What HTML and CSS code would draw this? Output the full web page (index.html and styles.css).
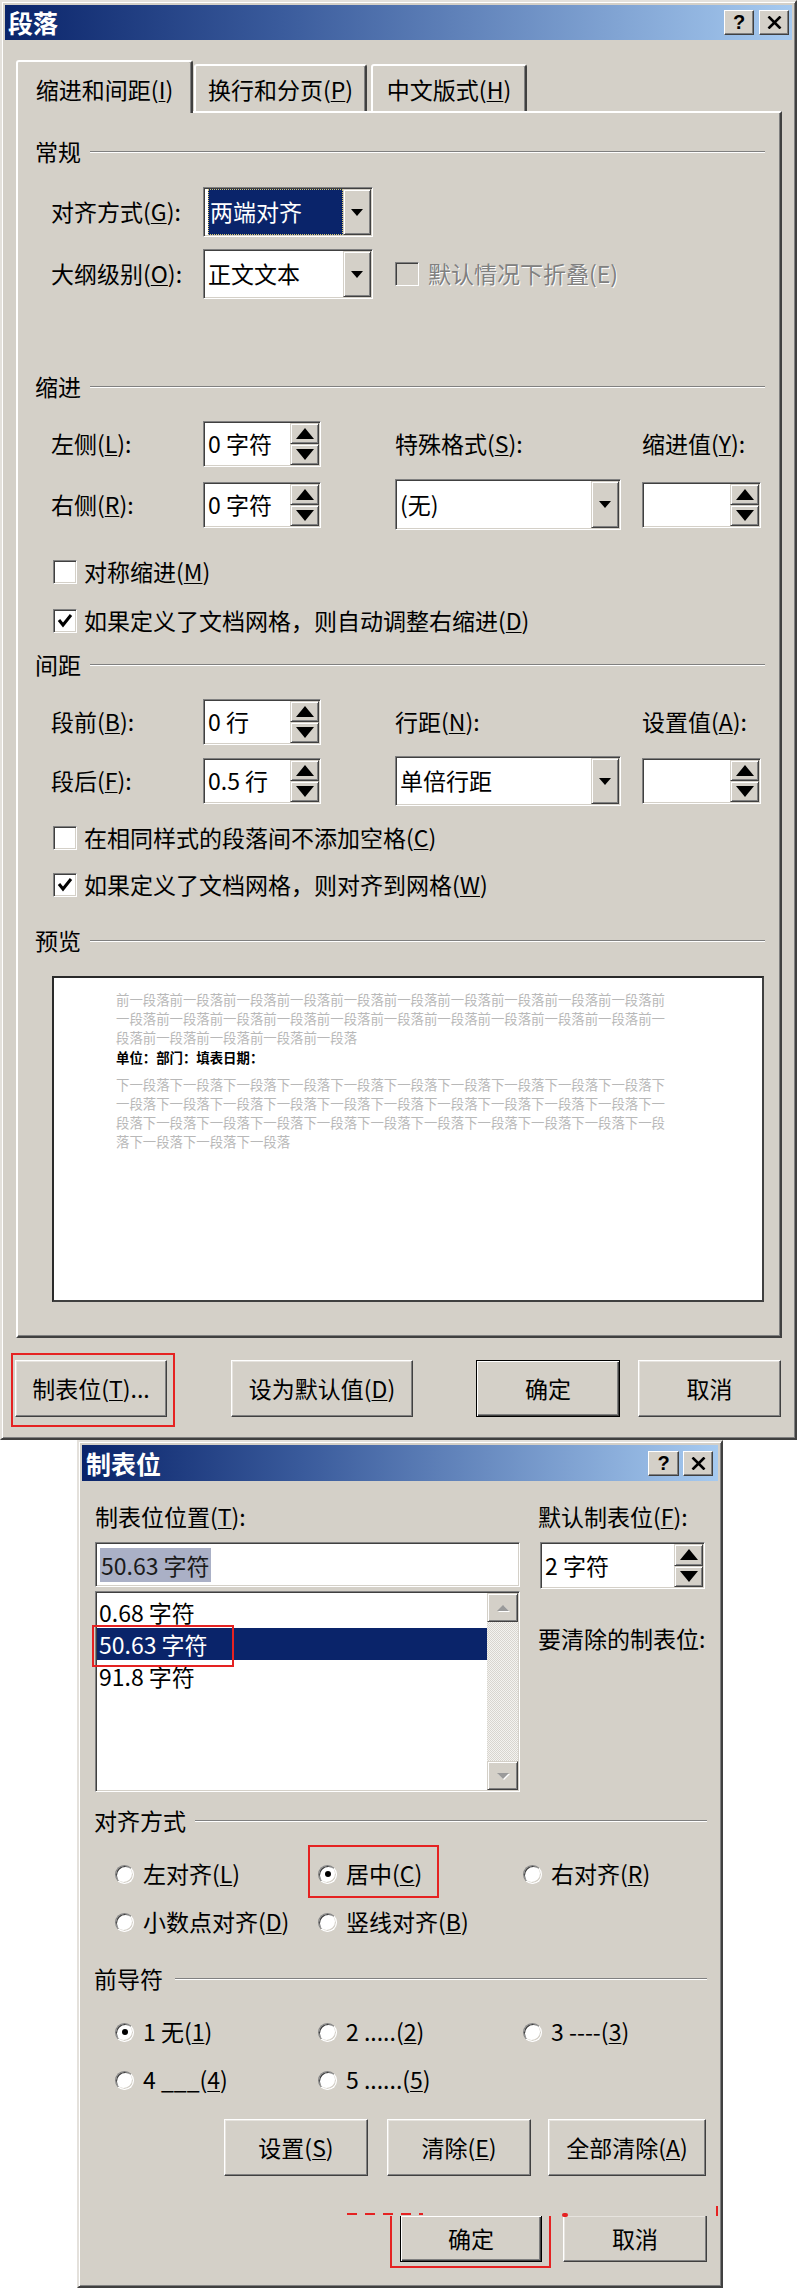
FILE: index.html
```html
<!DOCTYPE html>
<html lang="zh-CN">
<head>
<meta charset="utf-8">
<title>段落</title>
<link rel="stylesheet" href="styles.css">
</head>
<body>
<div class="dlg dlg1">
  <div class="titlebar">
    <span class="title">段落</span>
    <div class="capbtns">
      <span class="capbtn">?</span>
      <span class="capbtn"><svg width="15" height="13" viewBox="0 0 15 13"><path d="M1.5 0.5 L13.5 12.5 M13.5 0.5 L1.5 12.5" stroke="#000" stroke-width="2.6"/></svg></span>
    </div>
  </div>

  <div class="tabs">
    <div class="tab active">缩进和间距(<u>I</u>)</div>
    <div class="tab t2">换行和分页(<u>P</u>)</div>
    <div class="tab t3">中文版式(<u>H</u>)</div>
  </div>

  <div class="panel">
    <div class="sec"><span>常规</span><i class="rule"></i></div>

    <div class="crow r1">
      <span class="lbl">对齐方式(<u>G</u>):</span>
      <div class="combo sunken"><div class="cval"><span class="hl">两端对齐</span></div><div class="dd"></div></div>
    </div>
    <div class="crow r2">
      <span class="lbl">大纲级别(<u>O</u>):</span>
      <div class="combo sunken"><div class="cval">正文文本</div><div class="dd"></div></div>
      <span class="cb sunken dis"></span>
      <span class="distext">默认情况下折叠(E)</span>
    </div>

    <div class="sec s-indent"><span>缩进</span><i class="rule"></i></div>

    <div class="grow g1">
      <span class="lbl">左侧(<u>L</u>):</span>
      <div class="spin sunken w118"><span class="val">0 字符</span><span class="arrows"><i class="up"></i><i class="dn"></i></span></div>
      <span class="lbl">特殊格式(<u>S</u>):</span>
      <span class="lbl">缩进值(<u>Y</u>):</span>
    </div>
    <div class="grow g2">
      <span class="lbl">右侧(<u>R</u>):</span>
      <div class="spin sunken w118"><span class="val">0 字符</span><span class="arrows"><i class="up"></i><i class="dn"></i></span></div>
      <div class="combo sunken wide"><div class="cval">(无)</div><div class="dd"></div></div>
      <div class="spin sunken w119"><span class="val"></span><span class="arrows"><i class="up"></i><i class="dn"></i></span></div>
    </div>

    <div class="cbrow c1"><span class="cb sunken"></span><span>对称缩进(<u>M</u>)</span></div>
    <div class="cbrow c2"><span class="cb sunken"><svg class="tick" width="18" height="18" viewBox="0 0 18 18"><path d="M3 8 L7 13 L15 3" fill="none" stroke="#000" stroke-width="3"/></svg></span><span>如果定义了文档网格，则自动调整右缩进(<u>D</u>)</span></div>

    <div class="sec s-space"><span>间距</span><i class="rule"></i></div>

    <div class="grow g3">
      <span class="lbl">段前(<u>B</u>):</span>
      <div class="spin sunken w118"><span class="val">0 行</span><span class="arrows"><i class="up"></i><i class="dn"></i></span></div>
      <span class="lbl">行距(<u>N</u>):</span>
      <span class="lbl">设置值(<u>A</u>):</span>
    </div>
    <div class="grow g4">
      <span class="lbl">段后(<u>F</u>):</span>
      <div class="spin sunken w118"><span class="val">0.5 行</span><span class="arrows"><i class="up"></i><i class="dn"></i></span></div>
      <div class="combo sunken wide h50"><div class="cval">单倍行距</div><div class="dd"></div></div>
      <div class="spin sunken w119"><span class="val"></span><span class="arrows"><i class="up"></i><i class="dn"></i></span></div>
    </div>

    <div class="cbrow c3"><span class="cb sunken"></span><span>在相同样式的段落间不添加空格(<u>C</u>)</span></div>
    <div class="cbrow c4"><span class="cb sunken"><svg class="tick" width="18" height="18" viewBox="0 0 18 18"><path d="M3 8 L7 13 L15 3" fill="none" stroke="#000" stroke-width="3"/></svg></span><span>如果定义了文档网格，则对齐到网格(<u>W</u>)</span></div>

    <div class="sec s-prev"><span>预览</span><i class="rule"></i></div>

    <div class="preview">
      <div class="ptext">
        <p class="pg">前一段落前一段落前一段落前一段落前一段落前一段落前一段落前一段落前一段落前一段落前一段落前一段落前一段落前一段落前一段落前一段落前一段落前一段落前一段落前一段落前一段落前一段落前一段落前一段落前一段落</p>
        <p class="pb">单位：部门：填表日期：</p>
        <p class="pg pn">下一段落下一段落下一段落下一段落下一段落下一段落下一段落下一段落下一段落下一段落下一段落下一段落下一段落下一段落下一段落下一段落下一段落下一段落下一段落下一段落下一段落下一段落下一段落下一段落下一段落下一段落下一段落下一段落下一段落下一段落下一段落下一段落下一段落下一段落</p>
      </div>
    </div>
  </div>

  <div class="btnrow1">
    <div class="redbox rb1"><div class="btn w152">制表位(<u>T</u>)...</div></div>
    <div class="btn w182 m56">设为默认值(<u>D</u>)</div>
    <div class="btn def w144 m63">确定</div>
    <div class="btn w143 m18">取消</div>
  </div>
</div>

<div class="dlg dlg2">
  <div class="titlebar t2bar">
    <span class="title">制表位</span>
    <div class="capbtns c2btns">
      <span class="capbtn cb31">?</span>
      <span class="capbtn"><svg width="15" height="13" viewBox="0 0 15 13"><path d="M1.5 0.5 L13.5 12.5 M13.5 0.5 L1.5 12.5" stroke="#000" stroke-width="2.6"/></svg></span>
    </div>
  </div>

  <div class="d2body">
    <div class="d2top">
      <div class="lcol">
        <div class="lrow">制表位位置(<u>T</u>):</div>
        <div class="tinput sunken"><span class="selgray">50.63 字符</span></div>
        <div class="list sunken">
          <div class="items">
            <div class="item">0.68 字符</div>
            <div class="item sel">50.63 字符</div>
            <div class="item">91.8 字符</div>
          </div>
          <div class="vscroll">
            <span class="sbtn sup"></span>
            <span class="strack"></span>
            <span class="sbtn sdn"></span>
          </div>
          <span class="anno anno-list"></span>
        </div>
      </div>
      <div class="rcol">
        <div class="lrow">默认制表位(<u>F</u>):</div>
        <div class="spin sunken w165"><span class="val">2 字符</span><span class="arrows"><i class="up"></i><i class="dn"></i></span></div>
        <div class="lrow clr">要清除的制表位:</div>
      </div>
    </div>

    <div class="sec s-align2"><span>对齐方式</span><i class="rule"></i></div>
    <div class="rgrid rg1">
      <div class="ropt"><span class="radio"></span><span>左对齐(<u>L</u>)</span></div>
      <div class="ropt"><span class="radio on"></span><span>居中(<u>C</u>)</span><span class="anno anno-center"></span></div>
      <div class="ropt"><span class="radio"></span><span>右对齐(<u>R</u>)</span></div>
      <div class="ropt"><span class="radio"></span><span>小数点对齐(<u>D</u>)</span></div>
      <div class="ropt"><span class="radio"></span><span>竖线对齐(<u>B</u>)</span></div>
    </div>

    <div class="sec s-lead"><span>前导符</span><i class="rule"></i></div>
    <div class="rgrid rg2">
      <div class="ropt"><span class="radio on"></span><span>1 无(<u>1</u>)</span></div>
      <div class="ropt"><span class="radio"></span><span>2 .....(<u>2</u>)</span></div>
      <div class="ropt"><span class="radio"></span><span>3 ----(<u>3</u>)</span></div>
      <div class="ropt"><span class="radio"></span><span>4 ___(<u>4</u>)</span></div>
      <div class="ropt"><span class="radio"></span><span>5 ......(<u>5</u>)</span></div>
    </div>

    <div class="btnrow2">
      <div class="btn w144">设置(<u>S</u>)</div>
      <div class="btn w144 m19">清除(<u>E</u>)</div>
      <div class="btn w158 m17">全部清除(<u>A</u>)</div>
    </div>

    <div class="btnrow3">
      <span class="tear tear1"></span>
      <span class="tear tear2"></span>
      <span class="tear tear3"></span>
      <div class="redbox rb2"><div class="btn def cut w142">确定</div></div>
      <div class="btn cut w144 m12">取消</div>
    </div>
  </div>
</div>
</body>
</html>
```

FILE: styles.css
```css
* { box-sizing: border-box; }
html, body { margin: 0; padding: 0; background: #fff; }
body {
  width: 800px;
  font-family: "Noto Sans CJK SC", "Liberation Sans", sans-serif;
  font-size: 23px;
  color: #000;
  line-height: 1.2;
}
u { text-decoration: underline; text-decoration-thickness: 1px; text-underline-offset: 2px; }
p { margin: 0; }

/* ---------- window frame ---------- */
.dlg {
  background: #d4d0c8;
  border: 2px solid;
  border-color: #e4e1dc #404040 #404040 #e4e1dc;
  box-shadow: inset 1px 1px #fff, inset -1px -1px #808080;
  padding: 3px;
}
.dlg1 { width: 797px; height: 1440px; }
.dlg2 { width: 646px; height: 848px; margin-left: 77px; overflow: hidden; }

.titlebar {
  height: 35px;
  background: linear-gradient(to right, #0a246a 0%, #3a5b9c 35%, #a6caf0 100%);
  display: flex;
  align-items: center;
  justify-content: space-between;
  padding: 0 3px 0 3px;
}
.t2bar { height: 36px; padding: 0 5px 0 4px; }
.title { color: #fff; font-weight: bold; font-size: 25px; line-height: 1; }
.capbtns { display: flex; gap: 5px; }
.c2btns { gap: 4px; }
.capbtn {
  width: 30px; height: 25px;
  background: #d4d0c8;
  border: 1px solid;
  border-color: #fff #404040 #404040 #fff;
  box-shadow: inset -1px -1px #808080;
  display: flex; align-items: center; justify-content: center;
  font: bold 20px "Liberation Sans", sans-serif;
  color: #000;
}
.cb31 { width: 31px; }

/* ---------- tabs ---------- */
.tabs {
  display: flex;
  align-items: flex-end;
  height: 51px;
  margin: 20px 0 0 11px;
  position: relative;
  z-index: 1;
}
.tab {
  height: 47px;
  display: flex; align-items: center; justify-content: center;
  background: #d4d0c8;
  border: 2px solid;
  border-bottom: none;
  border-color: #fff #404040 transparent #fff;
  box-shadow: inset -1px 0 #808080;
  border-radius: 3px 3px 0 0;
  padding-top: 3px;
  white-space: nowrap;
}
.tab.active { width: 177px; height: 53px; margin-bottom: -2px; padding-top: 4px; }
.tab.t2 { width: 173px; margin-left: 1px; }
.tab.t3 { width: 156px; margin-left: 4px; }

/* ---------- panel ---------- */
.panel {
  margin-left: 11px;
  width: 766px;
  height: 1227px;
  border: 2px solid;
  border-color: #fff #404040 #404040 #fff;
  box-shadow: inset -1px -1px #808080;
  padding: 24px 15px 0 17px;
}

.sec { height: 30px; display: flex; align-items: center; white-space: nowrap; }
.sec .rule {
  flex: 1;
  height: 2px;
  border-top: 1px solid #808080;
  border-bottom: 1px solid #fff;
  margin-left: 9px;
}
.s-indent { margin-top: 73px; }
.s-space { margin-top: 14px; }
.s-prev { margin-top: 26px; }

/* 3D helpers */
.sunken {
  background: #fff;
  border: 1px solid;
  border-color: #808080 #fff #fff #808080;
  box-shadow: inset 1px 1px #404040, inset -1px -1px #d4d0c8;
  padding: 1px;
}
.btn {
  height: 57px;
  display: flex; align-items: center; justify-content: center;
  background: #d4d0c8;
  border: 1px solid;
  border-color: #fff #404040 #404040 #fff;
  box-shadow: inset -1px -1px #808080, inset 1px 1px #e6e3de;
  white-space: nowrap;
}
.btn.def {
  border: 1px solid #000;
  box-shadow: inset 1px 1px #fff, inset -1px -1px #404040, inset -2px -2px #808080;
}

.lbl { white-space: nowrap; }

/* combo rows */
.crow { display: flex; align-items: center; height: 50px; margin-left: 16px; }
.crow .lbl { width: 152px; }
.r1 { margin-top: 20px; }
.r2 { margin-top: 12px; }

.combo { width: 170px; height: 50px; display: flex; }
.combo.wide { width: 226px; height: 51px; }
.combo.h50 { height: 50px; }
.cval { flex: 1; display: flex; align-items: center; padding-left: 3px; white-space: nowrap; overflow: hidden; }
.hl {
  background: #0a246a; color: #fff;
  height: 100%; width: 100%;
  display: flex; align-items: center;
  padding-left: 2px;
  outline: 1px dotted #d8c870;
  outline-offset: -1px;
}
.dd {
  width: 28px;
  background: #d4d0c8;
  border: 1px solid;
  border-color: #d4d0c8 #404040 #404040 #d4d0c8;
  box-shadow: inset 1px 1px #fff, inset -1px -1px #808080;
  display: flex; align-items: center; justify-content: center;
}
.dd::after {
  content: "";
  border-left: 6px solid transparent;
  border-right: 6px solid transparent;
  border-top: 7px solid #000;
}

.cb { width: 24px; height: 24px; flex: none; display: flex; align-items: center; justify-content: center; }
.cb.dis { background: #d4d0c8; margin-left: 22px; }
.distext { margin-left: 9px; color: #808080; text-shadow: 1px 1px #fff; white-space: nowrap; }

/* grid rows */
.grow {
  display: grid;
  grid-template-columns: 152px 192px 247px 119px;
  height: 50px;
  align-items: center;
  margin-left: 16px;
}
.g1 { margin-top: 17px; }
.g2 { margin-top: 10px; height: 51px; }
.g3 { margin-top: 17px; }
.g4 { margin-top: 9px; }

.spin { height: 46px; display: flex; }
.w118 { width: 118px; }
.w119 { width: 119px; }
.w165 { width: 165px; height: 47px; margin-left: 2px; margin-top: 10px; }
.spin .val { flex: 1; display: flex; align-items: center; padding-left: 3px; white-space: nowrap; }
.arrows { width: 29px; display: flex; flex-direction: column; }
.arrows i {
  flex: 1;
  background: #d4d0c8;
  border: 1px solid;
  border-color: #d4d0c8 #404040 #404040 #d4d0c8;
  box-shadow: inset 1px 1px #fff, inset -1px -1px #808080;
  display: flex; align-items: center; justify-content: center;
}
.arrows i::after { content: ""; border-left: 9px solid transparent; border-right: 9px solid transparent; }
.arrows .up::after { border-bottom: 11px solid #000; }
.arrows .dn::after { border-top: 11px solid #000; }

/* checkbox rows */
.cbrow { display: flex; align-items: center; height: 30px; margin-left: 18px; gap: 7px; white-space: nowrap; }
.c1 { margin-top: 27px; }
.c2 { margin-top: 19px; }
.c3 { margin-top: 17px; }
.c4 { margin-top: 17px; }

/* preview */
.preview {
  margin: 20px 0 0 17px;
  width: 712px;
  height: 326px;
  background: #fff;
  border: 2px solid;
  border-color: #2a2a2a #404040 #404040 #2a2a2a;
  padding: 12px 0 0 62px;
}
.ptext { width: 41em; font-size: 13.4px; line-height: 19.2px; word-break: break-all; }
.pg { color: #b8b8b8; }
.pb { color: #000; font-weight: bold; }
.pn { margin-top: 8px; }

/* dialog 1 buttons */
.btnrow1 { display: flex; align-items: flex-start; margin: 15px 0 0 6px; }
.redbox { border: 2px solid #e52222; }
.rb1 { padding: 5px 6px 8px 2px; }
.w152 { width: 152px; }
.w182 { width: 182px; }
.w144 { width: 144px; }
.w143 { width: 143px; }
.w158 { width: 158px; }
.w142 { width: 142px; }
.m56 { margin-left: 56px; margin-top: 7px; }
.m63 { margin-left: 63px; margin-top: 7px; }
.m18 { margin-left: 18px; margin-top: 7px; }
.m19 { margin-left: 19px; }
.m17 { margin-left: 17px; }
.m12 { margin-left: 12px; }

/* ---------- dialog 2 ---------- */
.d2body { padding: 0 11px 0 13px; }
.d2top { display: flex; margin-top: 21px; }
.lcol { width: 425px; }
.rcol { width: 167px; margin-left: 18px; }
.lrow { height: 30px; display: flex; align-items: center; white-space: nowrap; }
.lrow.clr { margin-top: 35px; }

.tinput { height: 45px; margin-top: 10px; display: flex; align-items: center; padding-left: 4px; }
.selgray { background: #aab0c6; color: #1a1a1a; padding: 2px 1px; line-height: 30px; }

.list { height: 201px; margin-top: 4px; display: flex; position: relative; }
.items { flex: 1; padding-top: 3px; }
.item { height: 32px; line-height: 32px; padding-left: 2px; white-space: nowrap; }
.item.sel { background: #0a246a; color: #fff; }
.vscroll {
  width: 31px;
  display: flex; flex-direction: column;
  background: repeating-conic-gradient(#f4f3f0 0 25%, #d8d5cf 0 50%) 0 0 / 2px 2px;
}
.strack { flex: 1; }
.sbtn {
  height: 29px;
  background: #d4d0c8;
  border: 1px solid;
  border-color: #d4d0c8 #404040 #404040 #d4d0c8;
  box-shadow: inset 1px 1px #fff, inset -1px -1px #808080;
  display: flex; align-items: center; justify-content: center;
}
.sbtn::after { content: ""; border-left: 6px solid transparent; border-right: 6px solid transparent; }
.sup::after { border-bottom: 6px solid #9a9a9a; filter: drop-shadow(1px 1px 0 #fff); }
.sdn::after { border-top: 6px solid #9a9a9a; filter: drop-shadow(1px 1px 0 #fff); }

.anno { position: absolute; border: 2px solid #e52222; pointer-events: none; }
.anno-list { left: -4px; top: 33px; width: 142px; height: 42px; }
.anno-center { left: -10px; top: -5px; width: 131px; height: 53px; }

.s-align2 { margin-top: 14px; margin-left: -1px; }
.s-lead { margin-top: 18px; margin-left: -1px; }
.s-lead .rule { margin-left: 12px; }

.rgrid {
  display: grid;
  grid-template-columns: 203px 205px 1fr;
  grid-auto-rows: 48px;
  margin-left: 20px;
}
.rg1 { margin-top: 14px; }
.rg2 { margin-top: 14px; }
.ropt { display: flex; align-items: center; gap: 9px; position: relative; white-space: nowrap; }
.radio {
  width: 19px; height: 19px; flex: none;
  border-radius: 50%;
  background: #fff;
  border: 1px solid;
  border-color: #808080 #fff #fff #808080;
  box-shadow: inset 1px 1px #404040, inset -1px -1px #d4d0c8;
  display: flex; align-items: center; justify-content: center;
}
.radio.on::after { content: ""; width: 6px; height: 6px; border-radius: 50%; background: #000; }

.btnrow2 { display: flex; margin: 15px 0 0 129px; }

.btnrow3 { display: flex; align-items: flex-start; margin: 40px 0 0 295px; position: relative; }
.rb2 { border-top: none; padding: 0 7px 4px 8px; }
.btn.cut { height: 46px; border-top: none; }
.tear { position: absolute; background: #e52222; }
.tear1 { left: -43px; top: -3px; width: 76px; height: 2px; background: repeating-linear-gradient(to right, #e52222 0 10px, transparent 10px 18px); }
.tear2 { left: 172px; top: -3px; width: 6px; height: 4px; border-radius: 2px; }
.tear3 { left: 326px; top: -10px; width: 2px; height: 10px; }
```
